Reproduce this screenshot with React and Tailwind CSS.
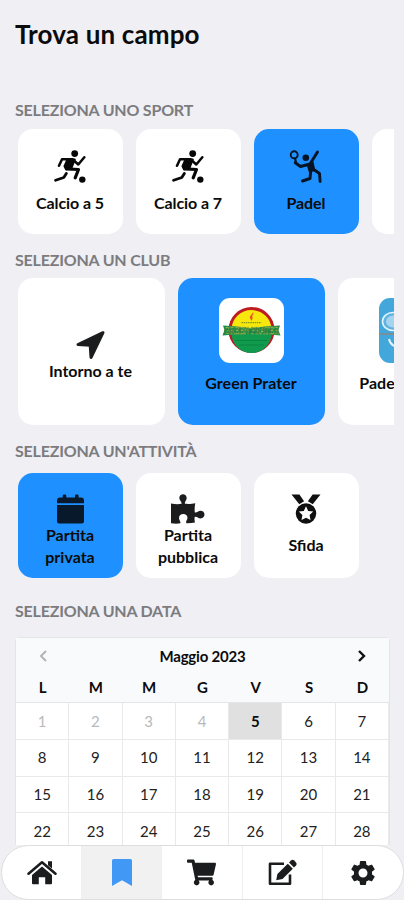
import React, { useState } from 'react';
import { FaShoppingCart } from 'react-icons/fa';
import { MdSettings } from 'react-icons/md';

const SoccerIcon = () => (
  <svg viewBox="0 0 32 33" className="w-8 h-[33px]" fill="none" stroke="#080808" strokeLinecap="round" strokeLinejoin="round">
    <circle cx="20.7" cy="3.6" r="3.4" fill="#080808" stroke="none" />
    <circle cx="28.3" cy="29.6" r="3.2" fill="#080808" stroke="none" />
    <path d="M5 15.8 8 9.3h10.5l5.8 5.2 6-7.2" strokeWidth="2.5" />
    <path d="M13.500 9.500h7.300l-3.600 9.200-5.200.5-1.500-3z" fill="#080808" strokeWidth="2" />
    <path d="m12.500 18.800 12 .7-3.300 8.300" strokeWidth="3.200" />
    <path d="m12.300 23.500-2.500 4L1.600 30.300" strokeWidth="2.800" />
  </svg>
);

const PadelIcon = () => (
  <svg viewBox="0 0 34 33" className="w-[34px] h-[33px]" fill="none" stroke="#061426" strokeLinecap="round" strokeLinejoin="round">
    <circle cx="5.200" cy="4.800" r="3.500" strokeWidth="1.900" />
    <path d="m6.200 9 .8 4" strokeWidth="2.200" />
    <circle cx="16.800" cy="7.800" r="3.300" fill="#061426" stroke="none" />
    <path d="m6.200 12.700 5.300 3.800 9.500-2.500 7.500-12" strokeWidth="2.900" />
    <path d="m18.500 15 5.300-3 1.700 8.200-5 1.500z" fill="#061426" strokeWidth="1.500" />
    <path d="m21.800 20.500-.8 8-7.500 2.500" strokeWidth="2.900" />
    <path d="m24 19 6.500 4.500.6 8" strokeWidth="2.900" />
  </svg>
);

const ArrowIcon = () => (
  <svg viewBox="0 0 30 30" className="w-[30px] h-[30px]" fill="#1b1c1d" stroke="#1b1c1d" strokeWidth="3" strokeLinejoin="round">
    <path d="M27 2.700 2 14.500l12.200.8.800 12.200z" />
  </svg>
);

const CalendarIcon = () => (
  <svg viewBox="0 0 27 30" className="w-[27px] h-[30px]" fill="#07192b">
    <rect x="5.700" y="0.500" width="3.600" height="6" rx="1.300" />
    <rect x="18" y="0.500" width="3.600" height="6" rx="1.300" />
    <path d="M3 3.500h21a3 3 0 0 1 3 3v2.700H0V6.500a3 3 0 0 1 3-3z" />
    <path d="M0 11h27v16.500a2 2 0 0 1-2 2H2a2 2 0 0 1-2-2z" />
  </svg>
);

const PuzzleIcon = () => (
  <svg viewBox="0 0 34 30" className="w-[34px] h-[30px]" fill="#1b1c1d">
    <path d="M0 9.500c3.500.7 8 .9 10.500.3.700-2-2.200-3.300-2.200-5.800C8.300 1.700 10 .3 12 .3s3.700 1.400 3.700 3.700c0 2.500-2.500 3.800-1.700 5.800 3.500.4 7.500 0 10.300-.6-.7 3-.8 6.500-.5 9.300 2 .7 3.300-1.800 5.700-1.800s4 1.700 4 3.800-1.600 3.900-4 3.900-3.700-2.300-5.700-1.600c-.5 1.800-.3 3.800.2 5.700-2.500.5-5.500.9-8.500.8-1.300-2.300 1-3 1-5.500 0-2.200-1.800-3.800-4.200-3.800S8 21.700 8 23.900c0 2.400 2 3.400 1.300 5.400-3 .5-6 .4-9.300-.1z" />
  </svg>
);

const MedalIcon = () => (
  <svg viewBox="0 0 30 30" className="w-[30px] h-[30px]" fill="#101010">
    <path d="M.500.500h7.900l4.700 6.800-4.800 3z" />
    <path d="M29.500.500h-7.900l-4.700 6.800 4.800 3z" />
    <circle cx="15" cy="19.500" r="10.200" />
    <path fill="#fff" d="m15 12.300 2.200 4.600 5 .7-3.600 3.500.9 5-4.500-2.400-4.500 2.400.9-5-3.600-3.500 5-.7z" />
  </svg>
);

const HomeIcon = () => (
  <svg viewBox="0 0 30 25" className="w-[30px] h-[25px]" fill="#1b1c1d">
    <path d="M1.500 13.800 15 2.200l13.500 11.600" fill="none" stroke="#1b1c1d" strokeWidth="2.500" strokeLinecap="round" strokeLinejoin="round" />
    <path d="M21 1.200h4v7.300l-4-3.300z" />
    <path d="M15 6.500 25 15v8.300a1 1 0 0 1-1 1h-5.800v-7h-6.400v7H6a1 1 0 0 1-1-1V15z" />
  </svg>
);

const BookmarkIcon = () => (
  <svg viewBox="0 0 20 27" className="w-5 h-[27px]" fill="#4199f5">
    <path d="M1.500 0h17A1.500 1.500 0 0 1 20 1.500V27l-10-5.700L0 27V1.500A1.500 1.500 0 0 1 1.500 0z" />
  </svg>
);

const EditIcon = () => (
  <svg viewBox="0 0 31 27" className="w-[31px] h-[27px]" fill="#1b1c1d">
    <path d="M17 4.800H3v20h20V15.500" fill="none" stroke="#1b1c1d" strokeWidth="2.600" strokeLinejoin="round" />
    <path d="m20.800 4.800 5 5L15.500 20l-6.300 1.300 1.200-6.200z" />
    <path d="m22 3.600 2-2a2.300 2.300 0 0 1 3.200 0l1.800 1.800a2.300 2.300 0 0 1 0 3.200l-2 2z" />
  </svg>
);

const GreenPraterLogo = () => (
  <svg viewBox="0 0 65 65" className="w-[65px] h-[65px] rounded-[11px] bg-white">
    <circle cx="32.500" cy="32" r="21.500" fill="#f6e80d" stroke="#bd1c22" strokeWidth="3" />
    <path d="M12.500 35h40a20 20 0 0 1-40 0z" fill="#109a4d" />
    <path d="M16.500 42.500h32M20 47h25" stroke="#0b7c3c" strokeWidth="0.700" />
    <path d="M34 14c-1 3-4 4-3 6s1 2 1 3c2-2 2-4 1-5 1-1 2-2 1-4z" fill="#e8561e" />
    <path d="M22.500 24.700h20" stroke="#6f7d24" strokeWidth="1" strokeDasharray="1.500 .7" />
    <path d="M4 27.500q14 .5 28.500 3 14-2.500 28.500-3l-1.500 4.500 2 5.500q-14-2-29-1.500-15-.5-29 1.500l2-5.500z" fill="#15884a" />
    <text x="32.500" y="36" textAnchor="middle" textLength="55" lengthAdjust="spacingAndGlyphs" fontFamily="Liberation Serif, serif" fontWeight="700" fontSize="11" fill="#125f33" stroke="#a9bd4a" strokeWidth=".45">GREEN PRATER</text>
  </svg>
);

const PadelClubLogo = () => (
  <svg viewBox="0 0 65 65" className="w-[65px] h-[65px] rounded-[11px] bg-[#43a7dc]">
    <ellipse cx="14" cy="23.500" rx="10.500" ry="9" fill="#5fb3e0" stroke="#e4f4fc" strokeWidth="1.600" />
    <ellipse cx="14" cy="23.500" rx="7" ry="6" fill="#a6d3ee" />
    <path d="M0 36h65" stroke="#78909c" strokeWidth="2" />
    <path d="M10 41c1 5 4 7 8 8" fill="none" stroke="#e4f4fc" strokeWidth="2" />
  </svg>
);

const sports = [
  { id: 'c5', label: 'Calcio a 5', icon: <SoccerIcon /> },
  { id: 'c7', label: 'Calcio a 7', icon: <SoccerIcon /> },
  { id: 'padel', label: 'Padel', icon: <PadelIcon /> },
  { id: 'more', label: '', icon: null },
];

const clubs = [
  { id: 'near', label: 'Intorno a te', icon: <ArrowIcon />, pad: 'pt-[52px]', text: 'mr-px' },
  { id: 'green', label: 'Green Prater', icon: <GreenPraterLogo />, pad: 'pt-5', text: 'mt-[9px]' },
  { id: 'padel', label: 'Pade', icon: <PadelClubLogo />, pad: 'pt-5', text: 'mt-[9px] mr-[68px]' },
];

const activities = [
  { id: 'private', lines: ['Partita', 'privata'], icon: <CalendarIcon /> },
  { id: 'public', lines: ['Partita', 'pubblica'], icon: <PuzzleIcon /> },
  { id: 'challenge', lines: ['Sfida'], icon: <MedalIcon /> },
];

const weekDays = ['L', 'M', 'M', 'G', 'V', 'S', 'D'];
const days = Array.from({ length: 28 }, (_, i) => i + 1);

const tabs = [
  { id: 'home', icon: <HomeIcon /> },
  { id: 'bookings', icon: <BookmarkIcon /> },
  { id: 'cart', icon: <FaShoppingCart className="w-[29px] h-[27px]" /> },
  { id: 'edit', icon: <EditIcon /> },
  { id: 'settings', icon: <MdSettings className="w-[30px] h-[30px]" /> },
];

const SectionTitle = ({ children }) => (
  <h2 className="h-6 px-[15px] text-[16px] leading-6 font-bold tracking-[-0.2px] text-[#7c7c80] whitespace-nowrap">{children}</h2>
);

const cardColor = (active) => (active ? 'bg-[#1e90ff]' : 'bg-white');

const App = () => {
  const [sport, setSport] = useState('padel');
  const [club, setClub] = useState('green');
  const [activity, setActivity] = useState('private');
  const [day, setDay] = useState(5);

  return (
    <div className="w-[404px] h-[900px] overflow-hidden flex flex-col bg-[#efeff4] text-[#0b0b0b] font-['Lato',sans-serif]">
      <div className="h-[845px] overflow-hidden shrink-0">
        <h1 className="pt-[16px] h-[52px] px-[15px] text-[26px] leading-9 font-bold tracking-[0.15px]">Trova un campo</h1>

        <div className="mt-[46px]"><SectionTitle>SELEZIONA UNO SPORT</SectionTitle></div>
        <div className="mt-[6.500px] ml-[17.500px] mr-[10.500px] flex gap-[13px] overflow-hidden">
          {sports.map((s) => (
            <button
              key={s.id}
              onClick={() => setSport(s.id)}
              className={`w-[105px] h-[105px] shrink-0 rounded-[15px] pt-[21px] flex flex-col items-center ${cardColor(sport === s.id)}`}
            >
              {s.icon}
              <span className="mt-[9px] text-[16px] leading-[22px] font-bold tracking-[-0.1px]">{s.label}</span>
            </button>
          ))}
        </div>

        <div className="mt-[14.500px]"><SectionTitle>SELEZIONA UN CLUB</SectionTitle></div>
        <div className="mt-[6px] ml-[17.500px] mr-[10.500px] flex gap-[13px] overflow-hidden">
          {clubs.map((c) => (
            <button
              key={c.id}
              onClick={() => setClub(c.id)}
              className={`w-[147px] h-[147px] shrink-0 rounded-[15px] flex flex-col items-center ${c.pad} ${cardColor(club === c.id)}`}
            >
              {c.icon}
              <span className={`text-[16px] leading-[22px] font-bold ${c.text}`}>{c.label}</span>
            </button>
          ))}
        </div>

        <div className="mt-[14px]"><SectionTitle>SELEZIONA UN'ATTIVITÀ</SectionTitle></div>
        <div className="mt-[10px] ml-[17.500px] mr-[10.500px] flex gap-[13px] overflow-hidden">
          {activities.map((a) => (
            <button
              key={a.id}
              onClick={() => setActivity(a.id)}
              className={`w-[105px] h-[105px] shrink-0 rounded-[15px] pt-[21px] flex flex-col items-center ${cardColor(activity === a.id)}`}
            >
              {a.icon}
              <span className={`text-[16px] leading-[22px] font-bold flex flex-col ${a.lines.length === 1 ? 'mt-[10px]' : ''}`}>
                {a.lines.map((line) => <span key={line}>{line}</span>)}
              </span>
            </button>
          ))}
        </div>

        <div className="mt-[21px]"><SectionTitle>SELEZIONA UNA DATA</SectionTitle></div>
        <div className="mt-[14px] ml-[15px] w-[375px] bg-white border border-[#e4e5e7] rounded-t-[4px]">
          <div className="h-[65px] bg-[#f9fafb] border-b border-[#e4e5e7]">
            <div className="h-9 grid grid-cols-7 items-center justify-items-center">
              <svg viewBox="0 0 8 12" className="w-2 h-3" fill="none" stroke="#b3b3b3" strokeWidth="2"><path d="M7 1 2 6l5 5" /></svg>
              <span className="col-span-5 text-[15px] font-bold tracking-[-0.2px]">Maggio 2023</span>
              <svg viewBox="0 0 8 12" className="w-2 h-3" fill="none" stroke="#111111" strokeWidth="2.400"><path d="m1 1 5 5-5 5" /></svg>
            </div>
            <div className="h-[26px] grid grid-cols-7 items-center text-center text-[15px] font-bold">
              {weekDays.map((d, i) => <span key={i}>{d}</span>)}
            </div>
          </div>
          <div className="grid grid-cols-7">
            {days.map((d) => (
              <button
                key={d}
                onClick={() => setDay(d)}
                className={`h-[36.8px] border-b border-r border-[#e9e9ea] text-[15px] ${
                  d === day ? 'bg-[#e0e0e0] font-bold' : d < 5 ? 'text-[#b9b9b9]' : 'text-[#222222]'
                }`}
              >
                {d}
              </button>
            ))}
          </div>
        </div>
      </div>

      <nav className="w-[403px] ml-px h-[55px] shrink-0 grid grid-cols-5 overflow-hidden rounded-full border border-[#dededf] bg-white text-[#1b1c1d]">
        {tabs.map((t) => (
          <button
            key={t.id}
            className={`flex items-center justify-center border-r border-[#eeeeef] last:border-r-0 ${t.id === 'bookings' ? 'bg-[#f1f1f2]' : ''}`}
          >
            {t.icon}
          </button>
        ))}
      </nav>
    </div>
  );
};

export default App;
